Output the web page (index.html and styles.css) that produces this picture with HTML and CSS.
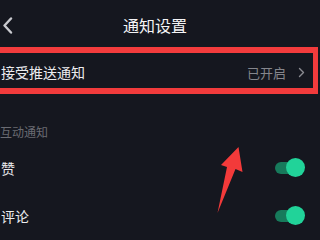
FILE: index.html
```html
<!DOCTYPE html>
<html lang="zh-CN">
<head>
    <meta charset="UTF-8">
    <meta name="viewport" content="width=device-width, initial-scale=1.0">
    <title>通知设置</title>
    <link rel="stylesheet" href="styles.css">
</head>
<body>
    <div class="screen">
        <div class="header">
            <div class="back">
                <svg width="11" height="17" viewBox="0 0 11 17">
                    <path d="M9 1.5 L2.5 8.5 L9 15.5" fill="none" stroke="#c9cacf" stroke-width="2.4" stroke-linecap="round" stroke-linejoin="round"/>
                </svg>
            </div>
            <div class="title">通知设置</div>
            <div class="spacer"></div>
        </div>

        <!-- highlighted row -->
        <div class="push-row">
            <span class="label">接受推送通知</span>
            <span class="value">已开启
                <svg class="chev" width="7" height="11" viewBox="0 0 7 11">
                    <path d="M1.5 1.5 L5.5 5.5 L1.5 9.5" fill="none" stroke="#8a8b91" stroke-width="1.4" stroke-linecap="round" stroke-linejoin="round"/>
                </svg>
            </span>
        </div>

        <div class="section-label">互动通知</div>

        <div class="row">
            <span class="label">赞</span>
            <span class="toggle"><span class="knob"></span></span>
        </div>
        <div class="row">
            <span class="label">评论</span>
            <span class="toggle"><span class="knob"></span></span>
        </div>

        <svg class="pointer" width="320" height="240" viewBox="0 0 320 240">
            <polygon points="238.5,147 242.5,172 235.5,169 217.5,213 227,167 221,165" fill="#f33a3a"/>
        </svg>
    </div>
</body>
</html>
```

FILE: styles.css
```css
body {
    margin: 0;
    background-color: #15171f;
    font-family: "Noto Sans CJK SC", "Noto Sans", sans-serif;
    color: #ececef;
    overflow: hidden;
}

.screen {
    position: relative;
    width: 320px;
    height: 240px;
    overflow: hidden;
}

.header {
    display: flex;
    align-items: center;
    height: 47px;
}

.back {
    width: 14px;
    padding-left: 2px;
    box-sizing: border-box;
    display: flex;
    align-items: center;
    padding-top: 3px;
}

.title {
    flex: 1;
    text-align: center;
    font-size: 16px;
    color: #f4f4f6;
    padding-top: 2px;
}

.spacer {
    width: 24px;
}

.push-row {
    display: flex;
    align-items: center;
    justify-content: space-between;
    box-sizing: border-box;
    width: 324px;
    height: 47px;
    margin-left: -6px;
    border: 6px solid #f23b3c;
    border-right-width: 5px;
    padding: 3px 8px 0 1px;
    font-size: 14px;
}

.value {
    display: flex;
    align-items: center;
    gap: 12px;
    font-size: 13px;
    color: #85868c;
}

.section-label {
    margin-top: 30px;
    height: 20px;
    line-height: 16px;
    font-size: 12px;
    color: #6a6b72;
}

.row {
    display: flex;
    align-items: center;
    justify-content: space-between;
    height: 48px;
    padding: 0 15px 0 1px;
    font-size: 14px;
}

.toggle {
    position: relative;
    width: 30px;
    height: 12px;
}

.toggle::before {
    content: "";
    position: absolute;
    left: 0;
    top: 0;
    width: 24px;
    height: 12px;
    border-radius: 6px;
    background-color: #177a5b;
}

.knob {
    position: absolute;
    right: 0;
    top: -4px;
    width: 19px;
    height: 19px;
    border-radius: 50%;
    background-color: #21d399;
}

.pointer {
    position: absolute;
    left: 0;
    top: 0;
}
```
